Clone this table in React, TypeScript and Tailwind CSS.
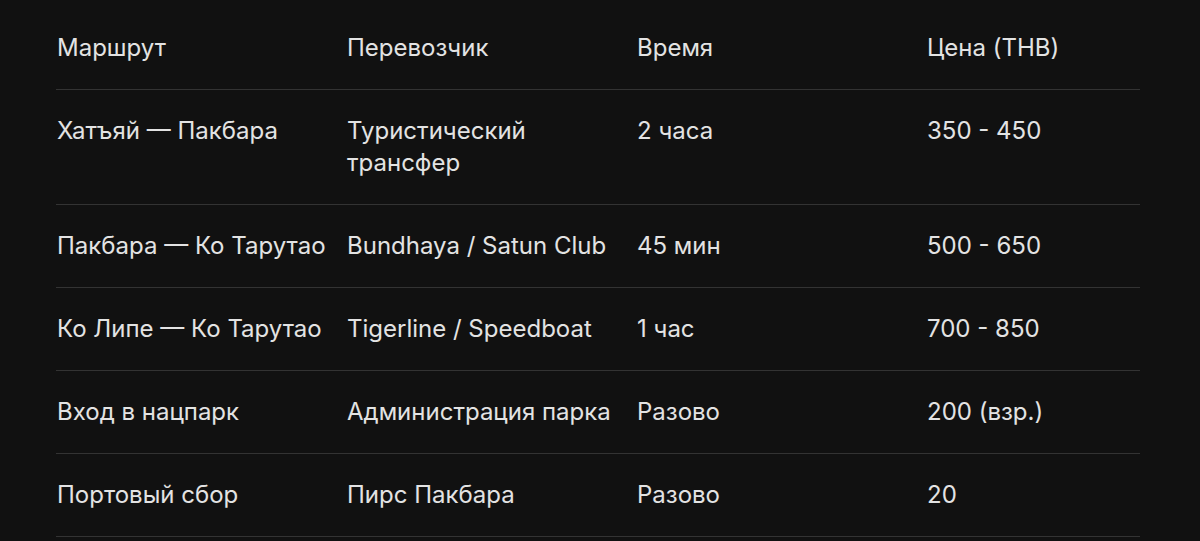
import React from "react";

const rows: [string, string, string, string][] = [
  ["Хатъяй — Пакбара", "Туристический трансфер", "2 часа", "350 - 450"],
  ["Пакбара — Ко Тарутао", "Bundhaya / Satun Club", "45 мин", "500 - 650"],
  ["Ко Липе — Ко Тарутао", "Tigerline / Speedboat", "1 час", "700 - 850"],
  ["Вход в нацпарк", "Администрация парка", "Разово", "200 (взр.)"],
  ["Портовый сбор", "Пирс Пакбара", "Разово", "20"],
];

export default function App() {
  return (
    <div className="w-full min-h-screen bg-[#111111] pl-[56px] pr-[60px] pt-[7px] font-['Inter',sans-serif] text-[24px] leading-[32px] text-[#e3e3e3]">
      <table className="w-full border-collapse text-left">
        <colgroup>
          <col className="w-[290px]" />
          <col className="w-[290px]" />
          <col className="w-[290px]" />
          <col />
        </colgroup>
        <thead>
          <tr className="border-b border-[#333333]">
            {["Маршрут", "Перевозчик", "Время", "Цена (THB)"].map((h) => (
              <th key={h} className="py-[25px] pl-[1px] pr-2 font-normal align-top">
                {h}
              </th>
            ))}
          </tr>
        </thead>
        <tbody>
          {rows.map((r) => (
            <tr key={r[0]} className="border-b border-[#333333]">
              {r.map((c, i) => (
                <td key={i} className="py-[25px] pl-[1px] pr-2 font-normal align-top">
                  {c === "Туристический трансфер" ? (
                    <>
                      Туристический
                      <br />
                      трансфер
                    </>
                  ) : (
                    c
                  )}
                </td>
              ))}
            </tr>
          ))}
        </tbody>
      </table>
    </div>
  );
}
